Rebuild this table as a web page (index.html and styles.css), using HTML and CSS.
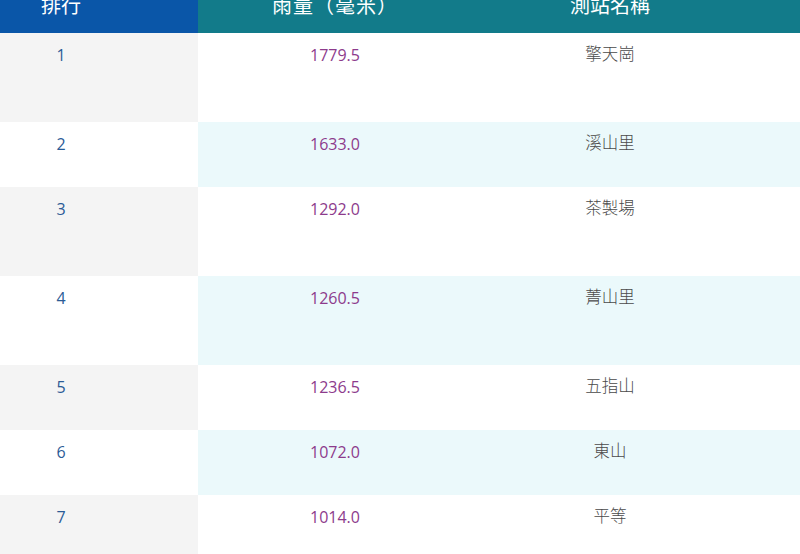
FILE: index.html
```html
<!DOCTYPE html>
<html lang="zh-Hant">
<head>
<meta charset="utf-8">
<link rel="stylesheet" href="styles.css">
</head>
<body>
<div class="rank-table">
  <div class="row head">
    <div class="cell c1"><span>排行</span></div>
    <div class="cell c2"><span>雨量（毫米）</span></div>
    <div class="cell c3"><span>測站名稱</span></div>
  </div>
  <div class="row odd tall">
    <div class="cell c1">1</div><div class="cell c2">1779.5</div><div class="cell c3">擎天崗</div>
  </div>
  <div class="row even">
    <div class="cell c1">2</div><div class="cell c2">1633.0</div><div class="cell c3">溪山里</div>
  </div>
  <div class="row odd tall">
    <div class="cell c1">3</div><div class="cell c2">1292.0</div><div class="cell c3">茶製場</div>
  </div>
  <div class="row even tall">
    <div class="cell c1">4</div><div class="cell c2">1260.5</div><div class="cell c3">菁山里</div>
  </div>
  <div class="row odd">
    <div class="cell c1">5</div><div class="cell c2">1236.5</div><div class="cell c3">五指山</div>
  </div>
  <div class="row even">
    <div class="cell c1">6</div><div class="cell c2">1072.0</div><div class="cell c3">東山</div>
  </div>
  <div class="row odd tall">
    <div class="cell c1">7</div><div class="cell c2">1014.0</div><div class="cell c3">平等</div>
  </div>
</div>
</body>
</html>
```

FILE: styles.css
```css
html, body {
  margin: 0;
  padding: 0;
  background: #ffffff;
}
body {
  font-family: "Segoe UI", "Open Sans", "Noto Sans CJK TC", sans-serif;
  font-size: 16px;
  overflow: hidden;
}
.rank-table {
  width: 800px;
}
.row {
  display: grid;
  grid-template-columns: 198px 274px 1fr;
  height: 65px;
}
.row.tall {
  height: 89px;
}
.cell {
  text-align: center;
  padding-top: 10px;
  line-height: 24px;
}
.c1 {
  padding-right: 76px;
  color: #2b5b96;
}
.c2 {
  color: #8d3b8c;
}
.c3 {
  padding-top: 8px;
  padding-right: 52px;
  color: #4a4a4a;
  font-family: "Noto Sans CJK TC", sans-serif;
  font-size: 16.5px;
  font-weight: 300;
}
.odd .c1 { background: #f4f4f4; }
.odd .c2, .odd .c3 { background: #ffffff; }
.even .c1 { background: #ffffff; }
.even .c2, .even .c3 { background: #ebf9fb; }

.row.head {
  height: 33px;
}
.head .cell {
  padding-top: 0;
  color: #ffffff;
  font-family: "Noto Sans CJK TC", sans-serif;
  font-size: 20px;
  line-height: 20px;
  font-weight: 400;
}
.head .c2 span {
  letter-spacing: 1px;
}
.head .cell span {
  display: block;
  margin-top: -5px;
}
.head .c1 { background: #0a56a8; }
.head .c2, .head .c3 { background: #127b8a; }
```
